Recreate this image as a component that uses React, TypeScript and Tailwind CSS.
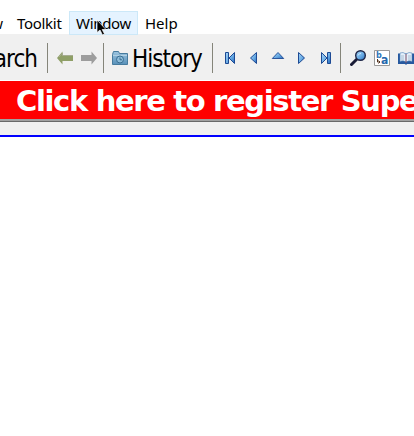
import type { ReactNode } from "react";

const edge = "#1d4a94";

function Gradients() {
  return (
    <svg className="absolute h-0 w-0">
      <defs>
        <linearGradient id="blue" x1="0" y1="0" x2="1" y2="1">
          <stop offset="0" stopColor="#a5d4f8" />
          <stop offset="0.55" stopColor="#6aace4" />
          <stop offset="1" stopColor="#2468bd" />
        </linearGradient>
        <linearGradient id="folder" x1="0" y1="0" x2="0" y2="1">
          <stop offset="0" stopColor="#9dc5e0" />
          <stop offset="1" stopColor="#5890b9" />
        </linearGradient>
      </defs>
    </svg>
  );
}

function Icon({ children, className = "" }: { children: ReactNode; className?: string }) {
  return (
    <svg viewBox="0 0 16 16" className={`h-4 w-4 shrink-0 ${className}`}>
      {children}
    </svg>
  );
}

function Separator({ className = "" }: { className?: string }) {
  return <div className={`h-[30px] w-px shrink-0 bg-[#85857a] ${className}`} />;
}

function MenuBar() {
  return (
    <div className="flex h-[34px] items-start bg-white pt-[11px] font-['Noto_Sans','Open_Sans',sans-serif] text-[15px] leading-[25px] whitespace-nowrap">
      <div className="flex h-[23px] w-[10px] shrink-0 justify-end pr-[7px]">View</div>
      <div className="h-[23px] w-[59px] shrink-0 pl-[7px] tracking-[-0.3px]">Toolkit</div>
      <div className="relative z-10 h-[24px] w-[69px] shrink-0 border border-[#cce8f8] bg-[#e5f3ff] pl-[6px] leading-[23px] tracking-[-0.3px]">
        Window
        <svg viewBox="0 0 12 19" className="absolute top-[8px] left-[26px] h-[19px] w-3 overflow-visible">
          <path d="M1 0v12.500l3-2.500 2.500 5 2-1-2.300-4.500h3.800z" fill="#000" stroke="#fff" strokeWidth="0.7" />
        </svg>
      </div>
      <div className="h-[23px] shrink-0 pl-[7px]">Help</div>
    </div>
  );
}

function ToolBar() {
  return (
    <div className="flex h-[46px] items-center overflow-hidden bg-[#f0f0f0] pt-[2px] font-['DejaVu_Sans_Condensed','DejaVu_Sans',sans-serif] text-[24px] leading-[30px] whitespace-nowrap">
      <div className="flex w-[37px] shrink-0 justify-end pt-[2px] tracking-[-1px]">Search</div>
      <Separator className="ml-[10px]" />
      <Icon className="ml-[9px]">
        <path d="M0 8 5.500 1.500V5H16v6H5.500v3.500z" fill="#8f9f67" />
        <path d="M2 7 5.500 3v2.500H16" fill="none" stroke="#a6ac91" />
      </Icon>
      <Icon className="ml-[8px]">
        <path d="M16 8 10.500 1.500V5H0v6h10.500v3.500z" fill="#9d9d9d" />
      </Icon>
      <Separator className="ml-[6px]" />
      <Icon className="ml-[8px]">
        <path d="M.5 14.500V4.500l1-3h5l1 2h8v11z" fill="url(#folder)" stroke="#477b9e" />
        <path d="M1 5.500h14" stroke="#afd0e3" />
        <circle cx="8" cy="9.500" r="3.500" fill="#8dbcd9" stroke="#386d92" />
        <path d="M8 7.500v2.300h2" fill="none" stroke="#386d92" />
      </Icon>
      <div className="ml-[4px] w-[80px] shrink-0 pt-[2px] tracking-[-1px]">History</div>
      <Separator />
      <Icon className="ml-[10px]">
        <path d="M2.500 2.500h3v11h-3zM11.500 2.500v11L6 8z" fill="url(#blue)" stroke={edge} />
      </Icon>
      <Icon className="ml-[8px]">
        <path d="M9.500 2.500v11L3.500 8z" fill="url(#blue)" stroke={edge} />
      </Icon>
      <Icon className="ml-[8px]">
        <path d="M1.300 8.500 7 2.500l5.700 6z" fill="url(#blue)" stroke={edge} strokeWidth="0.900" />
      </Icon>
      <Icon className="ml-[8px]">
        <path d="M3.500 2.500v11l6-5.500z" fill="url(#blue)" stroke={edge} />
      </Icon>
      <Icon className="ml-[8px]">
        <path d="M2.500 2.500v11L8 8zM8.500 2.500h3v11h-3z" fill="url(#blue)" stroke={edge} />
      </Icon>
      <Separator className="ml-[5px]" />
      <Icon className="ml-[9px]">
        <path d="m1.500 14.500 5-5" stroke="#181a35" strokeWidth="3" strokeLinecap="round" />
        <circle cx="10.500" cy="5.500" r="4.800" fill="url(#blue)" stroke="#1d2546" strokeWidth="1.400" />
        <path d="M8 5.500a3 3 0 0 1 3-2" fill="none" stroke="#c9e8fc" />
      </Icon>
      <Icon className="ml-[8px]">
        <path d="M.5.500h15v15H.5z" fill="#fff" stroke="#999" />
        <text x="2" y="8" fontSize="9" fontWeight="700" fill="#2f78ba">b</text>
        <text x="7" y="13.500" fontSize="12" fontWeight="700" fill="#2468ad">a</text>
        <path d="M3.500 9V12h2M4.500 10.500 6 12l-1.500 1.500" fill="none" stroke="#50311c" />
      </Icon>
      <Icon className="ml-[8px]">
        <path d="M0 3.500h16V14H9l-1 1-1-1H0z" fill="#26589f" />
        <path d="M2 3Q5 1.500 8 4q3-2.500 6-1v8.500Q11 10 8 12q-3-2-6-.5z" fill="#e3effa" stroke="#5285bb" strokeWidth="0.600" />
        <path d="M8 4v9" stroke="#7a4a64" />
        <path d="M3 6h3M3 8h3M3 10h3M10 6h3M10 8h3M10 10h3" stroke="#a8bdd2" />
      </Icon>
    </div>
  );
}

export default function App() {
  return (
    <div className="flex h-[436px] w-[414px] flex-col overflow-hidden bg-white text-black">
      <Gradients />
      <MenuBar />
      <ToolBar />
      <div className="h-[42px] shrink-0 overflow-hidden border-t border-b border-t-white border-b-[#696969] bg-[#f00] pl-[16px] font-['DejaVu_Sans',sans-serif] text-[29px] leading-[41px] font-bold tracking-[-1.35px] whitespace-nowrap text-white shadow-[inset_0_-2px_#a0a0a0]">
        Click here to register SuperMemo
      </div>
      <div className="h-[15px] shrink-0 border-b-2 border-[#00f] bg-[#f0f0f0]" />
      <div className="flex-1 bg-white" />
    </div>
  );
}
